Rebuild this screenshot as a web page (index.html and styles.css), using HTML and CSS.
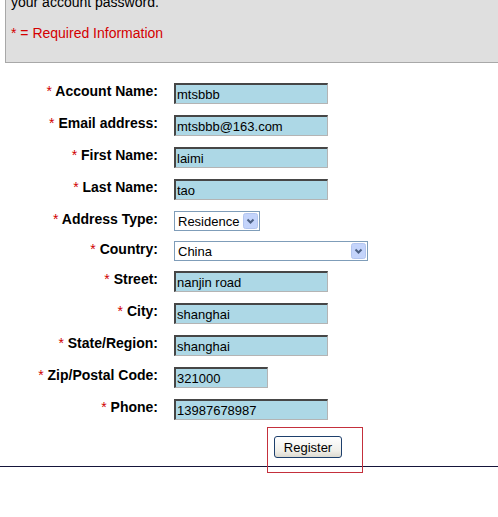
FILE: index.html
```html
<!DOCTYPE html>
<html lang="en">
<head>
    <meta charset="UTF-8">
    <title>Register</title>
    <link rel="stylesheet" href="styles.css">
</head>
<body>

    <!-- Notice box -->
    <div class="notice">
        <p>your account password.</p>
        <p class="required-note">* = Required Information</p>
    </div>

    <!-- Registration Form -->
    <form class="reg-form" onsubmit="return false">
        <div class="row">
            <label class="label"><span class="req">*</span> Account Name:</label>
            <input type="text" class="field" value="mtsbbb">
        </div>
        <div class="row">
            <label class="label"><span class="req">*</span> Email address:</label>
            <input type="text" class="field" value="mtsbbb@163.com">
        </div>
        <div class="row">
            <label class="label"><span class="req">*</span> First Name:</label>
            <input type="text" class="field" value="laimi">
        </div>
        <div class="row">
            <label class="label"><span class="req">*</span> Last Name:</label>
            <input type="text" class="field" value="tao">
        </div>
        <div class="row row-select">
            <label class="label"><span class="req">*</span> Address Type:</label>
            <div class="select select-small">
                <select>
                    <option>Residence</option>
                    <option>Business</option>
                </select>
                <svg class="arrow" width="15" height="16" viewBox="0 0 15 16">
                    <rect x="0.5" y="0.5" width="14" height="15" rx="2" fill="#c4d4fb" stroke="#b3c5ef"/>
                    <path d="M4.5 6.5 L7.5 9.5 L10.5 6.5" fill="none" stroke="#4d6185" stroke-width="2"/>
                </svg>
            </div>
        </div>
        <div class="row row-select">
            <label class="label"><span class="req">*</span> Country:</label>
            <div class="select select-wide">
                <select>
                    <option>China</option>
                </select>
                <svg class="arrow" width="15" height="16" viewBox="0 0 15 16">
                    <rect x="0.5" y="0.5" width="14" height="15" rx="2" fill="#c4d4fb" stroke="#b3c5ef"/>
                    <path d="M4.5 6.5 L7.5 9.5 L10.5 6.5" fill="none" stroke="#4d6185" stroke-width="2"/>
                </svg>
            </div>
        </div>
        <div class="row">
            <label class="label"><span class="req">*</span> Street:</label>
            <input type="text" class="field" value="nanjin road">
        </div>
        <div class="row">
            <label class="label"><span class="req">*</span> City:</label>
            <input type="text" class="field" value="shanghai">
        </div>
        <div class="row">
            <label class="label"><span class="req">*</span> State/Region:</label>
            <input type="text" class="field" value="shanghai">
        </div>
        <div class="row">
            <label class="label"><span class="req">*</span> Zip/Postal Code:</label>
            <input type="text" class="field field-short" value="321000">
        </div>
        <div class="row">
            <label class="label"><span class="req">*</span> Phone:</label>
            <input type="text" class="field" value="13987678987">
        </div>

        <div class="actions">
            <button type="submit" class="btn">Register</button>
            <span class="mark"></span>
        </div>
    </form>

    <div class="rule"></div>

</body>
</html>
```

FILE: styles.css
```css
body {
    margin: 0;
    padding-bottom: 40px;
    font-family: "Liberation Sans", Arial, sans-serif;
    font-size: 14px;
    color: #000;
    background: #fff;
}
.notice {
    margin: -6px 0 0 5px;
    padding: 0 0 20px 5px;
    background: #dfdfdf;
    border-left: 1px solid #a8a8a8;
    border-bottom: 1px solid #a8a8a8;
}
.notice p {
    margin: 0;
    line-height: 17px;
}
.notice .required-note {
    margin-top: 14px;
    color: #d40000;
}
.reg-form {
    margin-top: 20px;
}
.row {
    display: flex;
    align-items: flex-start;
    height: 21px;
    margin-bottom: 11px;
}
.row-select {
    height: 20px;
    margin-bottom: 10px;
}
.label {
    width: 158px;
    margin-right: 16px;
    text-align: right;
    font-weight: bold;
    line-height: 16px;
}
.req {
    color: #d00000;
    font-weight: normal;
}
.field {
    box-sizing: border-box;
    width: 154px;
    height: 21px;
    margin: 0;
    padding: 0 2px 0 1px;
    font-family: "Liberation Sans", Arial, sans-serif;
    font-size: 13px;
    color: #000;
    background: #add8e6;
    border-style: solid;
    border-width: 2px 1px 1px 2px;
    border-color: #464646 #b4b4b4 #b4b4b4 #464646;
    outline: none;
}
.field-short {
    width: 94px;
}
.select {
    box-sizing: border-box;
    display: flex;
    align-items: center;
    height: 20px;
    background: #fff;
    border: 1px solid #7f9db9;
}
.select-small {
    width: 86px;
}
.select-wide {
    width: 194px;
}
.select select {
    flex: 1;
    min-width: 0;
    appearance: none;
    -webkit-appearance: none;
    border: none;
    background: transparent;
    padding: 0 0 0 3px;
    margin: 0;
    font-family: "Liberation Sans", Arial, sans-serif;
    font-size: 13px;
    color: #000;
    outline: none;
}
.arrow {
    flex: none;
    margin-right: 1px;
}
.actions {
    position: relative;
    width: 68px;
    margin: 16px 0 0 274px;
}
.btn {
    box-sizing: border-box;
    width: 68px;
    height: 22px;
    padding: 0;
    font-family: "Liberation Sans", Arial, sans-serif;
    font-size: 13px;
    color: #000;
    background: linear-gradient(#ffffff, #f0efe9 70%, #dcdad0);
    border: 1px solid #1d3f6c;
    border-radius: 3px;
    cursor: pointer;
}
.mark {
    position: absolute;
    left: -7px;
    top: -9px;
    width: 94px;
    height: 44px;
    border: 1px solid #c4303c;
    z-index: 1;
}
.rule {
    margin-top: 8px;
    border-top: 1px solid #15153a;
}
```
